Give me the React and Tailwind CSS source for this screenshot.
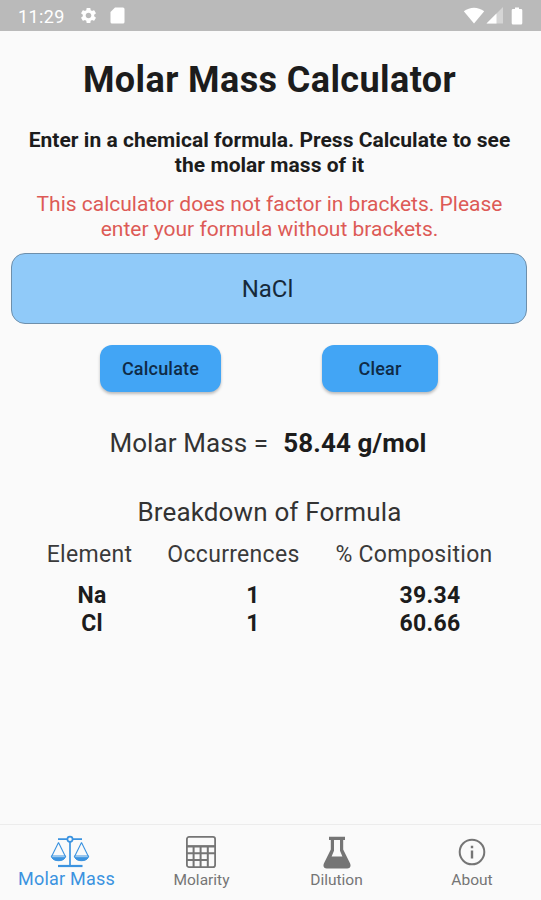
import React, { useState } from 'react';
import { MdSettings } from 'react-icons/md';

const rows = [
  { element: 'Na', count: 1, percent: '39.34' },
  { element: 'Cl', count: 1, percent: '60.66' },
];

const ScaleIcon = () => (
  <svg className="ml-[7px]" width="40" height="34" viewBox="0 0 40 34" fill="none" stroke="currentColor" strokeWidth="1.7">
    <path d="M8 4.2H32M20 6V31" />
    <path d="M8 31H32.5" strokeWidth="2.2" />
    <circle cx="20" cy="4.2" r="2.6" fill="#fafafa" />
    <path d="M8.5 7.5L1.6 21.5M8.5 7.5L15.4 21.5M31.5 7.5L24.6 21.5M31.5 7.5L38.4 21.5" strokeWidth="1.1" />
    <path d="M1.2 21H15.8C15 27 2 27 1.2 21ZM24.2 21H38.8C38 27 25 27 24.2 21Z" strokeWidth="1" />
    <path d="M2 22.5H15C13.5 26.8 3.5 26.8 2 22.5ZM25 22.5H38C36.5 26.8 26.5 26.8 25 22.5Z" fill="currentColor" strokeWidth="0.8" />
  </svg>
);

const CalculatorIcon = () => (
  <svg className="-ml-[2px]" width="32" height="34" viewBox="0 0 32 34" fill="none" stroke="currentColor" strokeWidth="1.8">
    <rect x="1.9" y="1.9" width="28.2" height="30.2" rx="2.2" />
    <path d="M2 11.3H30" strokeWidth="2.4" />
    <path d="M2 18.2H30M2 25H23M8.6 12V32M15.6 12V32M22.8 12V32" strokeWidth="2" />
  </svg>
);

const FlaskIcon = () => (
  <svg width="28" height="33" viewBox="0 0 28 33" fill="currentColor">
    <path fillRule="evenodd" d="M6 0.8H22V4H20.2V13.5L27 27.2C28.4 30.2 27 32.4 24.2 32.4H3.8C1 32.4 -0.4 30.2 1 27.2L7.8 13.5V4H6ZM11 4V14.8L8.6 20.4H19.4L17 14.8V4Z" />
  </svg>
);

const InfoIcon = () => (
  <svg width="28" height="28" viewBox="0 0 28 28" fill="none" stroke="currentColor" strokeWidth="2">
    <circle cx="14" cy="14" r="12.3" />
    <path d="M14 12.5V20.5M14 7.8V10.2" strokeWidth="2.4" />
  </svg>
);

const tabs = [
  { label: 'Molar Mass', icon: <ScaleIcon /> },
  { label: 'Molarity', icon: <CalculatorIcon /> },
  { label: 'Dilution', icon: <FlaskIcon /> },
  { label: 'About', icon: <InfoIcon /> },
];

const StatusBar = () => (
  <div className="h-[31px] shrink-0 bg-[#bababa] text-white flex items-center justify-between pl-[18px] pr-[18px]">
    <div className="flex items-center">
      <span className="text-[18px] tracking-[0.4px] leading-none w-[61px] mt-[3px]">11:29</span>
      <MdSettings size={19} />
      <svg className="ml-[12px]" width="15" height="17" viewBox="0 0 15 17" fill="currentColor">
        <path d="M5 0.5H13Q14.5 0.5 14.5 2V15Q14.5 16.5 13 16.5H2Q0.5 16.5 0.5 15V5Z" />
      </svg>
    </div>
    <div className="flex items-center">
      <svg width="22" height="17" viewBox="0 0 22 17" fill="currentColor">
        <path d="M0.8 4.3C7 -0.4 15 -0.4 21.2 4.3L11 16.5Z" />
      </svg>
      <svg className="ml-[1px]" width="17" height="17" viewBox="0 0 17 17" fill="currentColor">
        <path d="M17 0V16.5H0.5Z" opacity="0.4" />
        <path d="M10.5 6.5V16.5H0.5Z" />
      </svg>
      <svg className="ml-[8px]" width="12" height="18" viewBox="0 0 12 18" fill="currentColor">
        <path d="M4 0.5H8V2H10Q11.3 2 11.3 3.3V16Q11.3 17.5 10 17.5H2Q0.7 17.5 0.7 16V3.3Q0.7 2 2 2H4Z" />
      </svg>
    </div>
  </div>
);

export default function App() {
  const [formula, setFormula] = useState('NaCl');
  const [activeTab, setActiveTab] = useState(0);

  return (
    <div className="w-[541px] h-[900px] bg-[#fafafa] text-[#1c1c1c] font-['Roboto',sans-serif] flex flex-col overflow-hidden">
      <StatusBar />

      <main className="flex-1 flex flex-col text-center">
        <h1 className="mt-[27px] mr-[2px] text-[36px] leading-[44px] font-bold tracking-[0.4px]">Molar Mass Calculator</h1>
        <p className="mt-[26px] mr-[2px] px-4 text-[21px] leading-[25px] font-bold tracking-[0.03px]">
          Enter in a chemical formula. Press Calculate to see<br />the molar mass of it
        </p>
        <p className="mt-[14px] mr-[2px] px-4 text-[21px] leading-[25px] text-[#dd5a56]">
          This calculator does not factor in brackets. Please<br />enter your formula without brackets.
        </p>

        <input
          value={formula}
          onChange={e => setFormula(e.target.value)}
          className="mt-[11px] ml-[11px] mr-[14px] h-[71px] rounded-[14px] border-[1.5px] border-[#6e8fab] bg-[#90caf9] pr-[3px] text-center text-[24px] text-[#16293a] outline-none"
        />

        <div className="mt-[21px] flex pl-[100px] gap-[101px]">
          <button className="w-[121px] h-[47px] rounded-[12px] bg-[#42a5f5] text-[18px] font-medium tracking-[0.2px] text-[#0f2b47] shadow-[0_2px_3px_rgba(0,0,0,0.25)]">
            Calculate
          </button>
          <button onClick={() => setFormula('')} className="w-[116px] h-[47px] rounded-[12px] bg-[#42a5f5] text-[18px] font-medium tracking-[0.2px] text-[#0f2b47] shadow-[0_2px_3px_rgba(0,0,0,0.25)]">
            Clear
          </button>
        </div>

        <div className="mt-[35px] -ml-[5px] flex justify-center gap-[15px] text-[26px] leading-[32px] tracking-[0.1px]">
          <span className="text-[#333]">Molar Mass =</span>
          <span className="font-bold">58.44 g/mol</span>
        </div>

        <h2 className="mt-[37px] text-[26px] leading-[32px] tracking-[0.15px] text-[#333] -ml-[2px]">Breakdown of Formula</h2>

        <div className="mt-[13px] ml-[38px] mr-[40px] grid grid-cols-[103px_185px_176px] text-[23px] leading-[28px] tracking-[0.3px] text-[#3a3a3a]">
          <span>Element</span>
          <span>Occurrences</span>
          <span>% Composition</span>
        </div>
        <div className="mt-[13px] ml-[38px] mr-[40px] grid grid-cols-[108px_214px_140px] text-[23px] leading-[28px] tracking-[0.3px] font-bold">
          {rows.map(row => (
            <React.Fragment key={row.element}>
              <span>{row.element}</span>
              <span>{row.count}</span>
              <span>{row.percent}</span>
            </React.Fragment>
          ))}
        </div>
      </main>

      <nav className="h-[76px] shrink-0 border-t border-[#ececec] grid grid-cols-[133px_137px_133px_138px]">
        {tabs.map((tab, i) => (
          <button
            key={tab.label}
            onClick={() => setActiveTab(i)}
            className={`flex flex-col items-center ${activeTab === i ? 'text-[#3b93e0] text-[18px] tracking-[0.2px]' : 'text-[#757575] text-[15.5px]'}`}
          >
            <span className="h-[34px] mt-[10px] flex items-center">{tab.icon}</span>
            <span className={activeTab === i ? 'leading-[20px]' : 'leading-[22px]'}>{tab.label}</span>
          </button>
        ))}
      </nav>
    </div>
  );
}
